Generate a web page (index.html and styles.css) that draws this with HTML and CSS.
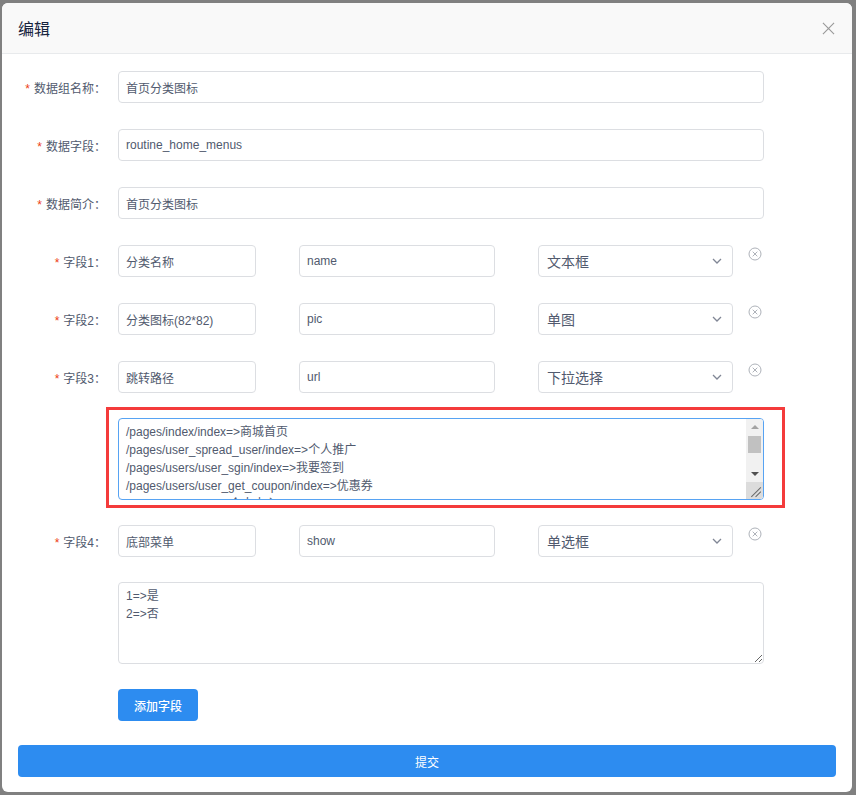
FILE: index.html
```html
<!DOCTYPE html>
<html>
<head>
<meta charset="utf-8">
<link rel="stylesheet" href="styles.css">
</head>
<body>
<div class="modal">
  <div class="modal-header">
    <span class="modal-title">编辑</span>
    <svg class="close" width="14" height="14" viewBox="0 0 14 14"><path d="M1 1L13 13M13 1L1 13" stroke="#999" stroke-width="1.2" fill="none"/></svg>
  </div>
  <div class="modal-body">
    <div class="row">
      <label class="lbl"><i>*</i>数据组名称：</label>
      <div class="input wide">首页分类图标</div>
    </div>
    <div class="row">
      <label class="lbl"><i>*</i>数据字段：</label>
      <div class="input wide">routine_home_menus</div>
    </div>
    <div class="row">
      <label class="lbl"><i>*</i>数据简介：</label>
      <div class="input wide">首页分类图标</div>
    </div>

    <div class="row">
      <label class="lbl"><i>*</i>字段1：</label>
      <div class="fields">
        <div class="input f1">分类名称</div>
        <div class="input f2">name</div>
        <div class="select">文本框<svg class="arrow" viewBox="0 0 10 6"><path d="M1 1L5 5L9 1" stroke="#808695" stroke-width="1.3" fill="none"/></svg></div>
        <svg class="remove" viewBox="0 0 14 14"><circle cx="7" cy="7" r="6" stroke="#a5a9b1" stroke-width="0.9" fill="none"/><path d="M4.7 4.7L9.3 9.3M9.3 4.7L4.7 9.3" stroke="#a5a9b1" stroke-width="0.9"/></svg>
      </div>
    </div>
    <div class="row">
      <label class="lbl"><i>*</i>字段2：</label>
      <div class="fields">
        <div class="input f1">分类图标(82*82)</div>
        <div class="input f2">pic</div>
        <div class="select">单图<svg class="arrow" viewBox="0 0 10 6"><path d="M1 1L5 5L9 1" stroke="#808695" stroke-width="1.3" fill="none"/></svg></div>
        <svg class="remove" viewBox="0 0 14 14"><circle cx="7" cy="7" r="6" stroke="#a5a9b1" stroke-width="0.9" fill="none"/><path d="M4.7 4.7L9.3 9.3M9.3 4.7L4.7 9.3" stroke="#a5a9b1" stroke-width="0.9"/></svg>
      </div>
    </div>
    <div class="row">
      <label class="lbl"><i>*</i>字段3：</label>
      <div class="fields">
        <div class="input f1">跳转路径</div>
        <div class="input f2">url</div>
        <div class="select">下拉选择<svg class="arrow" viewBox="0 0 10 6"><path d="M1 1L5 5L9 1" stroke="#808695" stroke-width="1.3" fill="none"/></svg></div>
        <svg class="remove" viewBox="0 0 14 14"><circle cx="7" cy="7" r="6" stroke="#a5a9b1" stroke-width="0.9" fill="none"/><path d="M4.7 4.7L9.3 9.3M9.3 4.7L4.7 9.3" stroke="#a5a9b1" stroke-width="0.9"/></svg>
      </div>
    </div>
    <div class="row ta-row">
      <div class="ta-wrap marked">
        <textarea class="ta focus">/pages/index/index=>商城首页
/pages/user_spread_user/index=>个人推广
/pages/users/user_sgin/index=>我要签到
/pages/users/user_get_coupon/index=>优惠券
/pages/user/user=>个人中心
/pages/activity/goods_seckill/index=>秒杀列表
/pages/activity/goods_combination/index=>拼团列表页
/pages/activity/goods_bargain/index=>砍价列表</textarea>
        <div class="vscroll">
          <div class="sb-btn"><svg viewBox="0 0 8 4"><path d="M0 4L4 0L8 4Z" fill="#a3a3a3"/></svg></div>
          <div class="sb-track"><div class="sb-thumb"></div></div>
          <div class="sb-btn"><svg viewBox="0 0 8 4"><path d="M0 0L8 0L4 4Z" fill="#505050"/></svg></div>
          <div class="sb-resizer"><svg viewBox="0 0 16 16"><path d="M5 14L14 5M9 14L14 9" stroke="#6b6b6b" stroke-width="1" fill="none"/></svg></div>
        </div>
      </div>
    </div>

    <div class="row">
      <label class="lbl"><i>*</i>字段4：</label>
      <div class="fields">
        <div class="input f1">底部菜单</div>
        <div class="input f2">show</div>
        <div class="select">单选框<svg class="arrow" viewBox="0 0 10 6"><path d="M1 1L5 5L9 1" stroke="#808695" stroke-width="1.3" fill="none"/></svg></div>
        <svg class="remove" viewBox="0 0 14 14"><circle cx="7" cy="7" r="6" stroke="#a5a9b1" stroke-width="0.9" fill="none"/><path d="M4.7 4.7L9.3 9.3M9.3 4.7L4.7 9.3" stroke="#a5a9b1" stroke-width="0.9"/></svg>
      </div>
    </div>
    <div class="row ta-row">
      <div class="ta-wrap">
        <textarea class="ta">1=>是
2=>否</textarea>
      </div>
    </div>
    <div class="row btn-row">
      <button class="btn add">添加字段</button>
    </div>
    <button class="btn submit">提交</button>
  </div>
</div>
</body>
</html>
```
FILE: styles.css
```css
* { box-sizing: border-box; }
html, body { margin: 0; height: 100%; }
body {
  background: #808080;
  padding: 3px 4px 3px 2px;
  font-family: "Liberation Sans", "Noto Sans CJK SC", sans-serif;
  font-size: 12px;
  color: #515a6e;
}
.modal {
  background: #fff;
  border-radius: 6px;
  height: 789px;
  overflow: hidden;
}
.modal-header {
  height: 51px;
  background: #f9f9f9;
  border-bottom: 1px solid #e8eaec;
  display: flex;
  align-items: center;
  justify-content: space-between;
  padding: 0 17px 0 16px;
}
.modal-title {
  font-size: 16px;
  color: #17233d;
  font-family: "Noto Sans CJK SC", sans-serif;
}
.close { width: 13px; height: 13px; }
.modal-body {
  padding: 17px 16px 0 16px;
}
.row {
  display: flex;
  align-items: center;
  height: 32px;
  margin-bottom: 26px;
}
.lbl {
  width: 100px;
  padding-right: 12px;
  text-align: right;
  font-size: 12px;
  color: #515a6e;
  white-space: nowrap;
}
.lbl i {
  font-style: normal;
  color: #ed4014;
  margin-right: 4px;
  font-family: "Liberation Sans", sans-serif;
}
.input {
  height: 32px;
  border: 1px solid #dcdee2;
  border-radius: 4px;
  padding: 0 7px;
  display: flex;
  align-items: center;
  font-size: 12px;
  color: #515a6e;
}
.wide { width: 646px; }
.fields {
  display: flex;
  align-items: flex-start;
  height: 32px;
}
.f1 { width: 138px; }
.f2 { width: 196px; margin-left: 43px; }
.select {
  width: 195px;
  margin-left: 43px;
  height: 32px;
  border: 1px solid #dcdee2;
  border-radius: 4px;
  padding: 0 8px;
  display: flex;
  align-items: center;
  justify-content: space-between;
  font-size: 14px;
  color: #515a6e;
}
.arrow { width: 10px; height: 6px; margin-right: 2px; }
.remove { width: 14px; height: 14px; margin-left: 15px; margin-top: 2px; }
.ta-row {
  height: 82px;
  padding-left: 100px;
  margin-top: -1px;
  margin-bottom: 25px;
}
.ta-wrap {
  position: relative;
  width: 646px;
  height: 82px;
}
.marked::after {
  content: "";
  position: absolute;
  top: -11px;
  left: -12px;
  right: -21px;
  bottom: -8px;
  border: 3px solid #f43b3b;
  pointer-events: none;
}
.ta {
  display: block;
  width: 646px;
  height: 82px;
  border: 1px solid #dcdee2;
  border-radius: 4px;
  padding: 4px 7px;
  font-family: "Liberation Sans", "Noto Sans CJK SC", sans-serif;
  font-size: 12px;
  line-height: 18px;
  color: #515a6e;
  resize: vertical;
  margin: 0;
  outline: none;
  overflow: hidden;
}
.ta.focus { border-color: #57a3f3; resize: none; padding-right: 24px; }
.vscroll {
  position: absolute;
  top: 1px;
  right: 1px;
  bottom: 1px;
  width: 17px;
  display: flex;
  flex-direction: column;
  background: #f1f1f1;
  border-radius: 0 3px 3px 0;
  overflow: hidden;
}
.sb-btn {
  height: 16px;
  display: flex;
  align-items: center;
  justify-content: center;
}
.sb-btn svg { width: 8px; height: 4px; }
.sb-track { flex: 1; padding: 1px 2px 0; }
.sb-thumb { height: 17px; background: #c1c1c1; }
.sb-resizer { height: 17px; background: #dcdcdc; }
.sb-resizer svg { width: 17px; height: 17px; display: block; }
.btn-row { margin-bottom: 24px; padding-left: 100px; }
.btn {
  border: 0;
  border-radius: 4px;
  background: #2d8cf0;
  color: #fff;
  font-family: "Noto Sans CJK SC", sans-serif;
  font-size: 12px;
  height: 32px;
  cursor: pointer;
}
.add { width: 80px; font-weight: 500; }
.submit { width: 818px; display: block; }
```
